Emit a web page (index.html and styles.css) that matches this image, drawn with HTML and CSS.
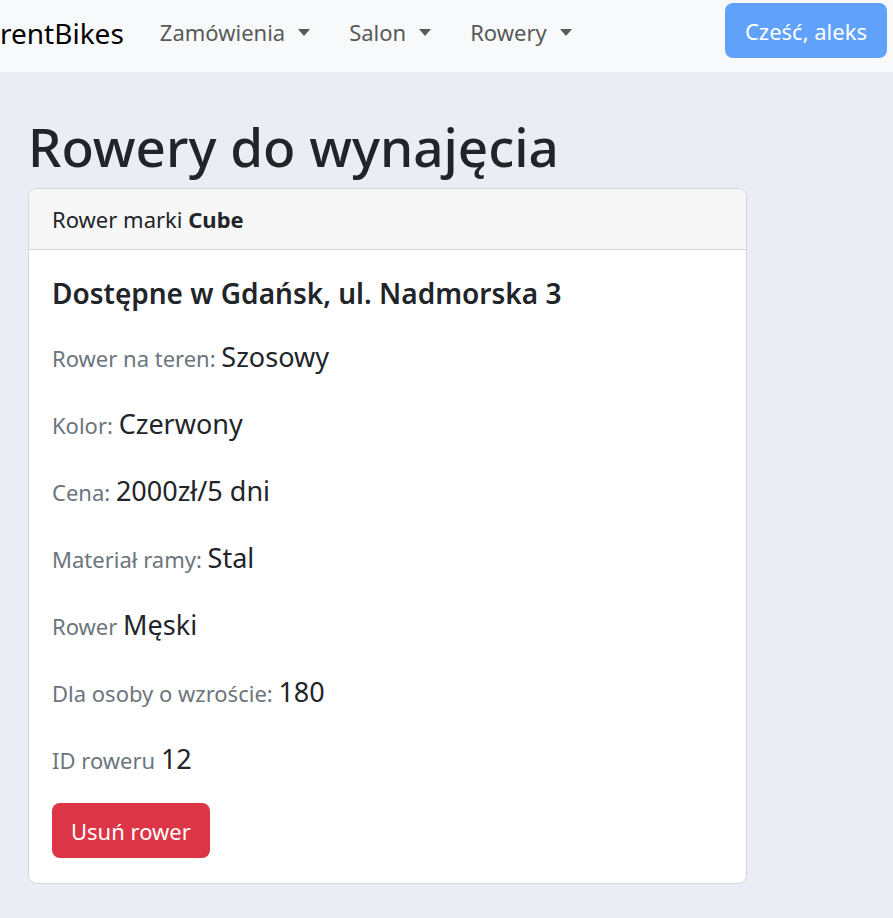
FILE: index.html
```html
<!DOCTYPE html>
<html lang="pl">
<head>
<meta charset="utf-8">
<title>rentBikes</title>
<link rel="stylesheet" href="styles.css">
</head>
<body>
<nav class="navbar">
  <a class="brand" href="#">rentBikes</a>
  <ul class="nav">
    <li class="nav-item"><a href="#">Zamówienia</a><span class="caret"></span></li>
    <li class="nav-item"><a href="#">Salon</a><span class="caret"></span></li>
    <li class="nav-item"><a href="#">Rowery</a><span class="caret"></span></li>
  </ul>
  <button class="btn-user">Cześć, aleks</button>
</nav>
<main class="container">
  <h1 class="title">Rowery do wynajęcia</h1>
  <section class="card">
    <div class="card-header">Rower marki <b>Cube</b></div>
    <div class="card-body">
      <h5 class="card-title">Dostępne w Gdańsk, ul. Nadmorska 3</h5>
      <p class="row"><span class="label">Rower na teren:</span> <span class="value">Szosowy</span></p>
      <p class="row"><span class="label">Kolor:</span> <span class="value">Czerwony</span></p>
      <p class="row"><span class="label">Cena:</span> <span class="value">2000zł/5 dni</span></p>
      <p class="row"><span class="label">Materiał ramy:</span> <span class="value">Stal</span></p>
      <p class="row"><span class="label">Rower</span> <span class="value">Męski</span></p>
      <p class="row"><span class="label">Dla osoby o wzroście:</span> <span class="value">180</span></p>
      <p class="row"><span class="label">ID roweru</span> <span class="value">12</span></p>
      <button class="btn-danger">Usuń rower</button>
    </div>
  </section>
</main>
</body>
</html>
```
FILE: styles.css
```css
* { box-sizing: border-box; }
html, body { margin: 0; padding: 0; }
body {
  font-family: "Noto Sans", "Open Sans", sans-serif;
  font-size: 22px;
  color: #212529;
  background: #eaedf4;
  min-height: 918px;
}
.navbar {
  display: flex;
  align-items: flex-start;
  height: 72px;
  background: #f8f9fa;
  padding: 0 6px 0 0;
}
.brand {
  font-size: 28px;
  line-height: 38px;
  margin-top: 14px;
  color: #000;
  text-decoration: none;
  margin-right: 36px;
}
.nav {
  display: flex;
  list-style: none;
  margin: 16px 0 0;
  padding: 0;
}
.nav-item {
  display: flex;
  align-items: center;
  margin-right: 39px;
  height: 33px;
}
.nav-item a {
  color: #595959;
  text-decoration: none;
  font-size: 22px;
  line-height: 33px;
}
.caret {
  display: inline-block;
  margin-left: 13px;
  width: 0;
  height: 0;
  border-top: 7px solid #595959;
  border-left: 6.5px solid transparent;
  border-right: 6.5px solid transparent;
}
.btn-user {
  margin-left: auto;
  margin-top: 3px;
  height: 55px;
  padding: 0 20px;
  background: #5fa1fb;
  color: #fff;
  border: none;
  border-radius: 8px;
  font-family: inherit;
  font-size: 22px;
}
.container {
  padding: 0 28px;
}
.title {
  font-size: 53px;
  font-weight: 500;
  line-height: 1.2;
  margin: 43px 0 9px;
}
.card {
  width: 719px;
  background: #fff;
  border: 1px solid #d4d5d8;
  border-radius: 9px;
  overflow: hidden;
}
.card-header {
  height: 61px;
  line-height: 60px;
  padding: 0 23px;
  background: #f7f7f7;
  border-bottom: 1px solid #d4d5d8;
}
.card-body {
  padding: 27px 23px 25px;
}
.card-title {
  font-size: 28px;
  font-weight: 600;
  margin: 0 0 24px;
  line-height: 1.2;
}
.row {
  margin: 0 0 20px;
  line-height: 45px;
}
.label {
  color: #6c757d;
  font-size: 22px;
}
.value {
  font-size: 27px;
}
.btn-danger {
  display: block;
  margin-top: 3px;
  height: 55px;
  padding: 0 19px;
  background: #dc3545;
  color: #fff;
  border: none;
  border-radius: 8px;
  font-family: inherit;
  font-size: 22px;
}
```
